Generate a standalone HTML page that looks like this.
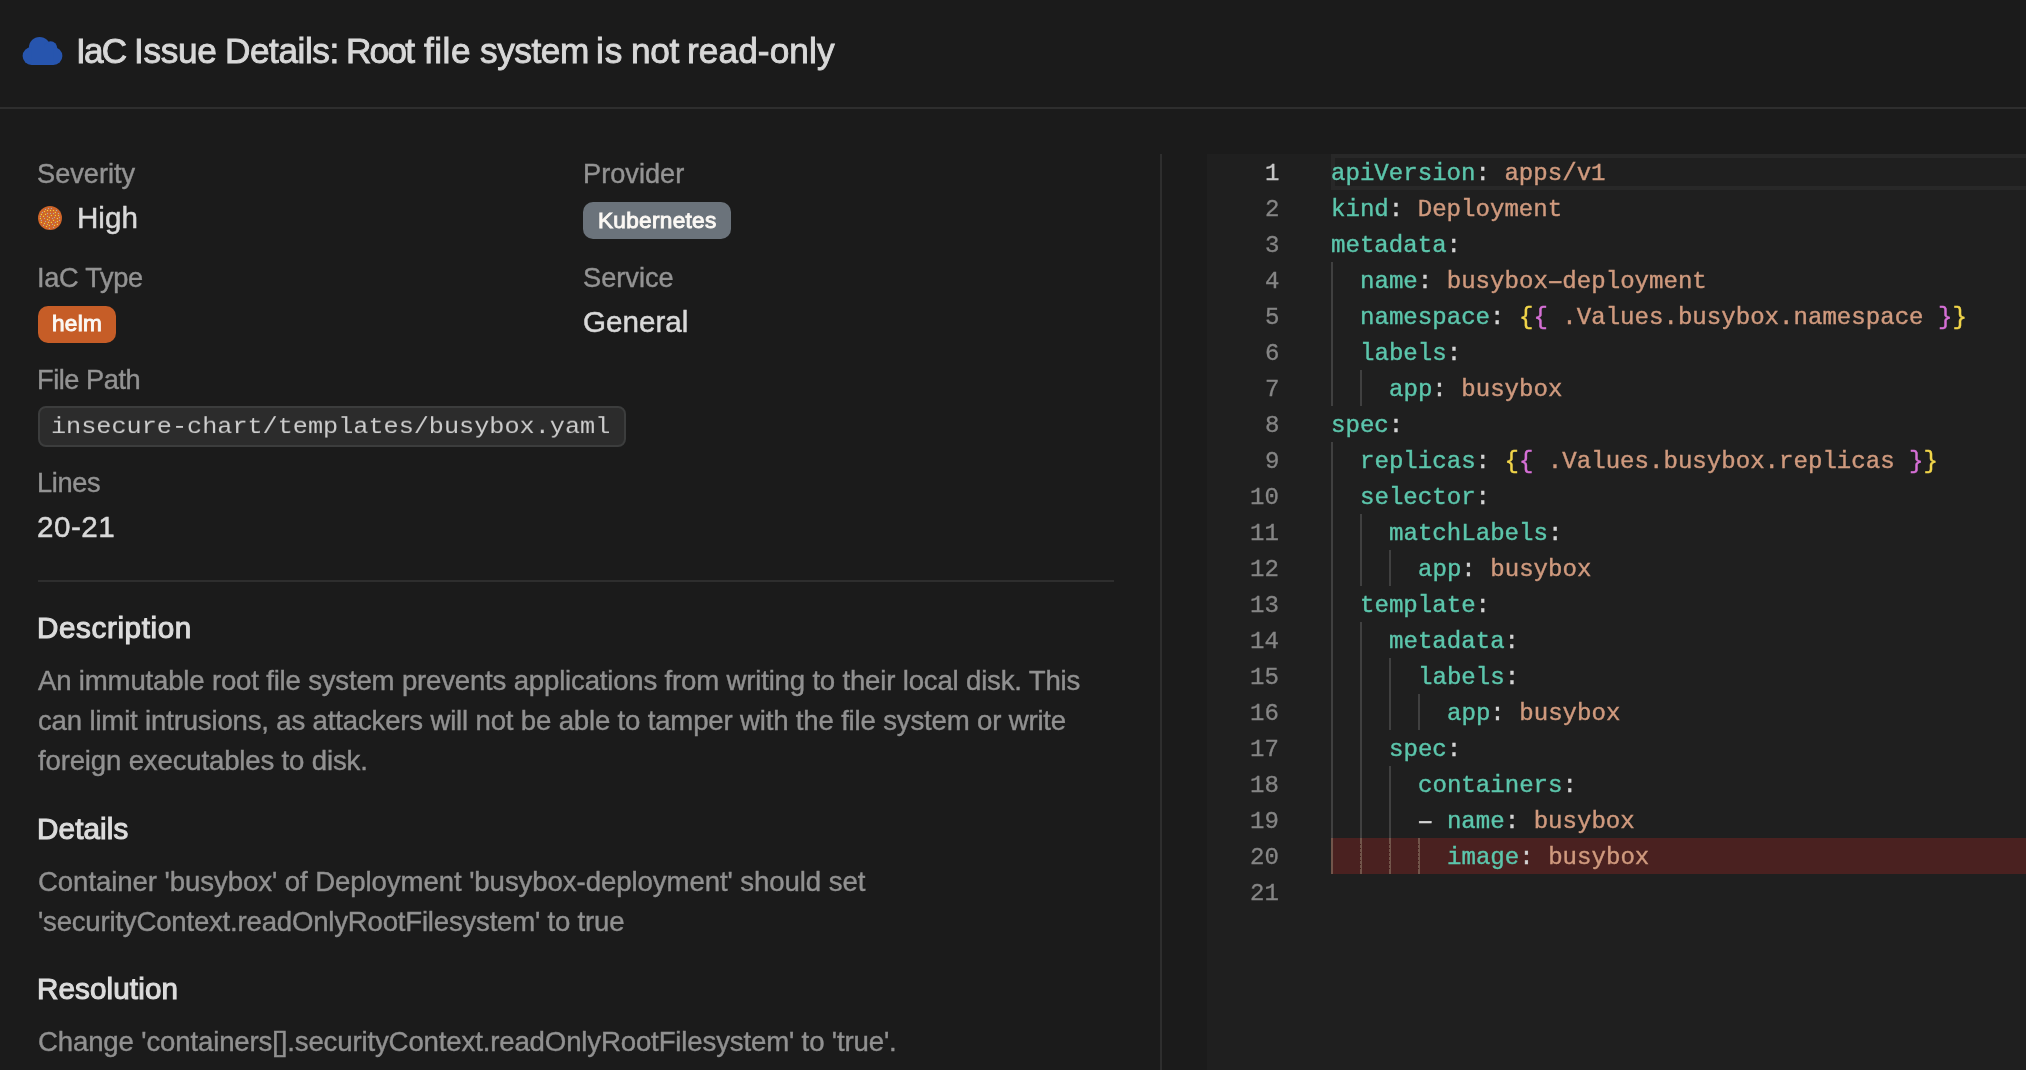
<!DOCTYPE html>
<html><head><meta charset="utf-8"><title>IaC Issue Details</title>
<style>
html,body{margin:0;padding:0;width:2026px;height:1070px;overflow:hidden;background:#1b1b1b}
.t{position:absolute;white-space:nowrap;font-family:"Liberation Sans",sans-serif;will-change:transform}
.m{position:absolute;white-space:nowrap;font-family:"Liberation Mono",monospace;will-change:transform}
.ln{right:747px;text-align:right;font-size:24.08px;line-height:36px;-webkit-text-stroke:0.3px currentColor}
.hy{display:inline-block;transform:scaleX(1.8)}
.code{font-size:24.08px;line-height:36px;-webkit-text-stroke:0.3px currentColor}
</style></head><body>
<svg class="cloud" width="44" height="32" viewBox="20 35 44 32" style="position:absolute;left:20px;top:35px"><g fill="#2755ae">
<circle cx="39.6" cy="47.6" r="10.7"/><circle cx="50.6" cy="47.8" r="6.6"/>
<circle cx="31.6" cy="56" r="9"/><circle cx="53.4" cy="56" r="9"/>
<rect x="31.6" y="47" width="21.8" height="18"/></g></svg>
<div class="t" style="left:76.0px;top:33.40px;font-size:35.2px;line-height:35.2px;color:#d8d8d8;font-weight:400;letter-spacing:-1.8px;-webkit-text-stroke:0.9px #d8d8d8;">IaC</div>
<div class="t" style="left:133.8px;top:33.40px;font-size:35.2px;line-height:35.2px;color:#d8d8d8;font-weight:400;letter-spacing:-0.31px;-webkit-text-stroke:0.9px #d8d8d8;">Issue</div>
<div class="t" style="left:225.4px;top:33.40px;font-size:35.2px;line-height:35.2px;color:#d8d8d8;font-weight:400;letter-spacing:-0.45px;-webkit-text-stroke:0.9px #d8d8d8;">Details:</div>
<div class="t" style="left:346.3px;top:33.40px;font-size:35.2px;line-height:35.2px;color:#d8d8d8;font-weight:400;letter-spacing:-1.8px;-webkit-text-stroke:0.9px #d8d8d8;">Root</div>
<div class="t" style="left:424.3px;top:33.40px;font-size:35.2px;line-height:35.2px;color:#d8d8d8;font-weight:400;letter-spacing:0.5px;-webkit-text-stroke:0.9px #d8d8d8;">file</div>
<div class="t" style="left:479.6px;top:33.40px;font-size:35.2px;line-height:35.2px;color:#d8d8d8;font-weight:400;letter-spacing:-0.45px;-webkit-text-stroke:0.9px #d8d8d8;">system</div>
<div class="t" style="left:596.2px;top:33.40px;font-size:35.2px;line-height:35.2px;color:#d8d8d8;font-weight:400;letter-spacing:0.9px;-webkit-text-stroke:0.9px #d8d8d8;">is</div>
<div class="t" style="left:630.6px;top:33.40px;font-size:35.2px;line-height:35.2px;color:#d8d8d8;font-weight:400;letter-spacing:-0.35px;-webkit-text-stroke:0.9px #d8d8d8;">not</div>
<div class="t" style="left:687.4px;top:33.40px;font-size:35.2px;line-height:35.2px;color:#d8d8d8;font-weight:400;letter-spacing:0.1px;-webkit-text-stroke:0.9px #d8d8d8;">read-only</div>
<div style="position:absolute;left:0;top:107px;width:2026px;height:2px;background:#2e2e2e"></div>
<div class="t" style="left:37px;top:160.18px;font-size:27.2px;line-height:27.2px;color:#939393;font-weight:400;letter-spacing:0px;-webkit-text-stroke:0.4px #939393;">Severity</div>
<div class="t" style="left:582.6px;top:160.18px;font-size:27.2px;line-height:27.2px;color:#939393;font-weight:400;letter-spacing:0px;-webkit-text-stroke:0.4px #939393;">Provider</div>
<svg width="24" height="24" viewBox="0 0 24 24" style="position:absolute;left:38px;top:206px"><circle cx="12" cy="12" r="12" fill="#cf6428"/><rect x="8.9" y="3.9" width="1.2" height="1.2" fill="#f2d03c"/><rect x="11.9" y="3.9" width="1.2" height="1.2" fill="#f2d03c"/><rect x="14.9" y="3.9" width="1.2" height="1.2" fill="#f2d03c"/><rect x="5.9" y="4.9" width="1.2" height="1.2" fill="#f2d03c"/><rect x="16.8" y="5.9" width="1.2" height="1.2" fill="#f2d03c"/><rect x="2.8" y="7.8" width="1.2" height="1.2" fill="#f2d03c"/><rect x="6.9" y="7.8" width="1.2" height="1.2" fill="#f2d03c"/><rect x="12.8" y="8.9" width="1.2" height="1.2" fill="#f2d03c"/><rect x="16.8" y="8.9" width="1.2" height="1.2" fill="#f2d03c"/><rect x="19.9" y="8.9" width="1.2" height="1.2" fill="#f2d03c"/><rect x="4.9" y="9.8" width="1.2" height="1.2" fill="#f2d03c"/><rect x="10.8" y="10.9" width="1.2" height="1.2" fill="#f2d03c"/><rect x="1.8" y="11.9" width="1.2" height="1.2" fill="#f2d03c"/><rect x="18.8" y="11.9" width="1.2" height="1.2" fill="#f2d03c"/><rect x="8.9" y="12.9" width="1.2" height="1.2" fill="#f2d03c"/><rect x="14.9" y="13.8" width="1.2" height="1.2" fill="#f2d03c"/><rect x="18.8" y="14.9" width="1.2" height="1.2" fill="#f2d03c"/><rect x="2.8" y="15.8" width="1.2" height="1.2" fill="#f2d03c"/><rect x="9.9" y="15.8" width="1.2" height="1.2" fill="#f2d03c"/><rect x="12.8" y="15.8" width="1.2" height="1.2" fill="#f2d03c"/><rect x="5.9" y="16.9" width="1.2" height="1.2" fill="#f2d03c"/><rect x="18.8" y="17.8" width="1.2" height="1.2" fill="#f2d03c"/><rect x="10.8" y="18.8" width="1.2" height="1.2" fill="#f2d03c"/><rect x="15.9" y="18.8" width="1.2" height="1.2" fill="#f2d03c"/><rect x="7.9" y="19.9" width="1.2" height="1.2" fill="#f2d03c"/><rect x="9.9" y="1.9" width="1.2" height="1.2" fill="#b8a4a0"/><rect x="12.8" y="1.9" width="1.2" height="1.2" fill="#b8a4a0"/><rect x="6.9" y="2.9" width="1.2" height="1.2" fill="#b8a4a0"/><rect x="17.9" y="3.9" width="1.2" height="1.2" fill="#b8a4a0"/><rect x="3.8" y="5.9" width="1.2" height="1.2" fill="#b8a4a0"/><rect x="8.9" y="6.9" width="1.2" height="1.2" fill="#b8a4a0"/><rect x="11.9" y="6.9" width="1.2" height="1.2" fill="#b8a4a0"/><rect x="14.9" y="6.9" width="1.2" height="1.2" fill="#b8a4a0"/><rect x="19.9" y="6.9" width="1.2" height="1.2" fill="#b8a4a0"/><rect x="1.8" y="9.8" width="1.2" height="1.2" fill="#b8a4a0"/><rect x="8.9" y="9.8" width="1.2" height="1.2" fill="#b8a4a0"/><rect x="15.9" y="10.9" width="1.2" height="1.2" fill="#b8a4a0"/><rect x="20.9" y="10.9" width="1.2" height="1.2" fill="#b8a4a0"/><rect x="5.9" y="11.9" width="1.2" height="1.2" fill="#b8a4a0"/><rect x="13.9" y="11.9" width="1.2" height="1.2" fill="#b8a4a0"/><rect x="2.8" y="13.8" width="1.2" height="1.2" fill="#b8a4a0"/><rect x="10.8" y="13.8" width="1.2" height="1.2" fill="#b8a4a0"/><rect x="20.9" y="13.8" width="1.2" height="1.2" fill="#b8a4a0"/><rect x="6.9" y="14.9" width="1.2" height="1.2" fill="#b8a4a0"/><rect x="16.8" y="15.8" width="1.2" height="1.2" fill="#b8a4a0"/><rect x="8.9" y="17.8" width="1.2" height="1.2" fill="#b8a4a0"/><rect x="13.9" y="17.8" width="1.2" height="1.2" fill="#b8a4a0"/><rect x="4.9" y="18.8" width="1.2" height="1.2" fill="#b8a4a0"/><rect x="14.9" y="20.8" width="1.2" height="1.2" fill="#b8a4a0"/><rect x="10.8" y="21.8" width="1.2" height="1.2" fill="#b8a4a0"/></svg>
<div class="t" style="left:77px;top:202.74px;font-size:29.6px;line-height:29.6px;color:#d9d9d9;font-weight:400;letter-spacing:0px;-webkit-text-stroke:0.5px #d9d9d9;">High</div>
<div style="position:absolute;left:583px;top:202px;width:148px;height:37px;border-radius:10px;background:#6b737b"></div>
<div class="t" style="left:597.8px;top:209.67px;font-size:22.6px;line-height:22.6px;color:#fbf8f4;font-weight:400;letter-spacing:0.3px;-webkit-text-stroke:0.95px #fbf8f4;">Kubernetes</div>
<div class="t" style="left:36.8px;top:263.78px;font-size:27.2px;line-height:27.2px;color:#939393;font-weight:400;letter-spacing:-0.3px;-webkit-text-stroke:0.4px #939393;">IaC Type</div>
<div class="t" style="left:582.6px;top:263.78px;font-size:27.2px;line-height:27.2px;color:#939393;font-weight:400;letter-spacing:0px;-webkit-text-stroke:0.4px #939393;">Service</div>
<div style="position:absolute;left:38px;top:306px;width:78px;height:37px;border-radius:10px;background:#c65d27"></div>
<div class="t" style="left:52px;top:313.07px;font-size:22.6px;line-height:22.6px;color:#fbf8f4;font-weight:400;letter-spacing:0.3px;-webkit-text-stroke:0.95px #fbf8f4;">helm</div>
<div class="t" style="left:582.5px;top:306.64px;font-size:29.6px;line-height:29.6px;color:#d9d9d9;font-weight:400;letter-spacing:0px;-webkit-text-stroke:0.5px #d9d9d9;">General</div>
<div class="t" style="left:36.8px;top:365.88px;font-size:27.2px;line-height:27.2px;color:#939393;font-weight:400;letter-spacing:-0.45px;-webkit-text-stroke:0.4px #939393;">File Path</div>
<div style="position:absolute;left:38px;top:406px;width:584px;height:37px;border-radius:8px;background:#2c2c2c;border:2px solid #3c3d3d"></div>
<div class="m" style="left:51.2px;top:412.19px;font-size:25.2px;line-height:30px;color:#cccccc;transform:scaleY(0.89);transform-origin:0 21.71px">insecure-chart/templates/busybox.yaml</div>
<div class="t" style="left:36.8px;top:468.98px;font-size:27.2px;line-height:27.2px;color:#939393;font-weight:400;letter-spacing:-0.35px;-webkit-text-stroke:0.4px #939393;">Lines</div>
<div class="t" style="left:37px;top:512.34px;font-size:29.6px;line-height:29.6px;color:#d9d9d9;font-weight:400;letter-spacing:0.5px;-webkit-text-stroke:0.5px #d9d9d9;">20-21</div>
<div style="position:absolute;left:38px;top:580px;width:1076px;height:2px;background:#2e2e2e"></div>
<div class="t" style="left:37px;top:612.54px;font-size:29.6px;line-height:29.6px;color:#dcdcdc;font-weight:400;letter-spacing:0.62px;-webkit-text-stroke:1.1px #dcdcdc;">Description</div>
<div class="t" style="left:37.5px;top:666.84px;font-size:27.6px;line-height:27.6px;color:#919191;font-weight:400;letter-spacing:-0.19px;-webkit-text-stroke:0.4px #919191;">An immutable root file system prevents applications from writing to their local disk. This</div>
<div class="t" style="left:37.5px;top:707.24px;font-size:27.6px;line-height:27.6px;color:#919191;font-weight:400;letter-spacing:-0.18px;-webkit-text-stroke:0.4px #919191;">can limit intrusions, as attackers will not be able to tamper with the file system or write</div>
<div class="t" style="left:37.5px;top:747.44px;font-size:27.6px;line-height:27.6px;color:#919191;font-weight:400;letter-spacing:-0.17px;-webkit-text-stroke:0.4px #919191;">foreign executables to disk.</div>
<div class="t" style="left:37px;top:813.54px;font-size:29.6px;line-height:29.6px;color:#dcdcdc;font-weight:400;letter-spacing:0.15px;-webkit-text-stroke:1.1px #dcdcdc;">Details</div>
<div class="t" style="left:37.5px;top:867.54px;font-size:27.6px;line-height:27.6px;color:#919191;font-weight:400;letter-spacing:-0.08px;-webkit-text-stroke:0.4px #919191;">Container 'busybox' of Deployment 'busybox-deployment' should set</div>
<div class="t" style="left:37.5px;top:907.84px;font-size:27.6px;line-height:27.6px;color:#919191;font-weight:400;letter-spacing:-0.21px;-webkit-text-stroke:0.4px #919191;">'securityContext.readOnlyRootFilesystem' to true</div>
<div class="t" style="left:37px;top:973.84px;font-size:29.6px;line-height:29.6px;color:#dcdcdc;font-weight:400;letter-spacing:0.12px;-webkit-text-stroke:1.1px #dcdcdc;">Resolution</div>
<div class="t" style="left:37.5px;top:1027.74px;font-size:27.6px;line-height:27.6px;color:#919191;font-weight:400;letter-spacing:-0.15px;-webkit-text-stroke:0.4px #919191;">Change 'containers[].securityContext.readOnlyRootFilesystem' to 'true'.</div>
<div style="position:absolute;left:1160px;top:154px;width:2px;height:916px;background:#2e2e2e"></div>
<div style="position:absolute;left:1207px;top:154px;width:819px;height:916px;background:#1f1f1f"></div>
<div style="position:absolute;left:1331px;top:154px;width:695px;height:36px;box-sizing:border-box;border:4px solid #282828;border-right:none"></div>
<div style="position:absolute;left:1331px;top:838px;width:695px;height:36px;background:#4a2120"></div>
<div class="m ln" style="top:155.59px;color:#c6c6c6">1</div>
<div class="m code" style="left:1331.00px;top:155.59px"><span style="color:#5cc6ac;-webkit-text-stroke:0.4px #5cc6ac">apiVersion</span><span style="color:#d4d4d4;-webkit-text-stroke:0.4px #d4d4d4">:&nbsp;</span><span style="color:#d09a7e;-webkit-text-stroke:0.4px #d09a7e">apps/v1</span></div>
<div class="m ln" style="top:191.59px;color:#858585">2</div>
<div class="m code" style="left:1331.00px;top:191.59px"><span style="color:#5cc6ac;-webkit-text-stroke:0.4px #5cc6ac">kind</span><span style="color:#d4d4d4;-webkit-text-stroke:0.4px #d4d4d4">:&nbsp;</span><span style="color:#d09a7e;-webkit-text-stroke:0.4px #d09a7e">Deployment</span></div>
<div class="m ln" style="top:227.59px;color:#858585">3</div>
<div class="m code" style="left:1331.00px;top:227.59px"><span style="color:#5cc6ac;-webkit-text-stroke:0.4px #5cc6ac">metadata</span><span style="color:#d4d4d4;-webkit-text-stroke:0.4px #d4d4d4">:</span></div>
<div style="position:absolute;left:1331.0px;top:262px;width:2px;height:36px;background:#404040"></div>
<div class="m ln" style="top:263.59px;color:#858585">4</div>
<div class="m code" style="left:1359.90px;top:263.59px"><span style="color:#5cc6ac;-webkit-text-stroke:0.4px #5cc6ac">name</span><span style="color:#d4d4d4;-webkit-text-stroke:0.4px #d4d4d4">:&nbsp;</span><span style="color:#d09a7e;-webkit-text-stroke:0.4px #d09a7e">busybox<span class=hy>-</span>deployment</span></div>
<div style="position:absolute;left:1331.0px;top:298px;width:2px;height:36px;background:#404040"></div>
<div class="m ln" style="top:299.59px;color:#858585">5</div>
<div class="m code" style="left:1359.90px;top:299.59px"><span style="color:#5cc6ac;-webkit-text-stroke:0.4px #5cc6ac">namespace</span><span style="color:#d4d4d4;-webkit-text-stroke:0.4px #d4d4d4">:&nbsp;</span><span style="color:#f1d54a;-webkit-text-stroke:0.4px #f1d54a">{</span><span style="color:#d670d6;-webkit-text-stroke:0.4px #d670d6">{</span><span style="color:#d09a7e;-webkit-text-stroke:0.4px #d09a7e">&nbsp;.Values.busybox.namespace&nbsp;</span><span style="color:#d670d6;-webkit-text-stroke:0.4px #d670d6">}</span><span style="color:#f1d54a;-webkit-text-stroke:0.4px #f1d54a">}</span></div>
<div style="position:absolute;left:1331.0px;top:334px;width:2px;height:36px;background:#404040"></div>
<div class="m ln" style="top:335.59px;color:#858585">6</div>
<div class="m code" style="left:1359.90px;top:335.59px"><span style="color:#5cc6ac;-webkit-text-stroke:0.4px #5cc6ac">labels</span><span style="color:#d4d4d4;-webkit-text-stroke:0.4px #d4d4d4">:</span></div>
<div style="position:absolute;left:1331.0px;top:370px;width:2px;height:36px;background:#404040"></div>
<div style="position:absolute;left:1359.9px;top:370px;width:2px;height:36px;background:#404040"></div>
<div class="m ln" style="top:371.59px;color:#858585">7</div>
<div class="m code" style="left:1388.80px;top:371.59px"><span style="color:#5cc6ac;-webkit-text-stroke:0.4px #5cc6ac">app</span><span style="color:#d4d4d4;-webkit-text-stroke:0.4px #d4d4d4">:&nbsp;</span><span style="color:#d09a7e;-webkit-text-stroke:0.4px #d09a7e">busybox</span></div>
<div class="m ln" style="top:407.59px;color:#858585">8</div>
<div class="m code" style="left:1331.00px;top:407.59px"><span style="color:#5cc6ac;-webkit-text-stroke:0.4px #5cc6ac">spec</span><span style="color:#d4d4d4;-webkit-text-stroke:0.4px #d4d4d4">:</span></div>
<div style="position:absolute;left:1331.0px;top:442px;width:2px;height:36px;background:#404040"></div>
<div class="m ln" style="top:443.59px;color:#858585">9</div>
<div class="m code" style="left:1359.90px;top:443.59px"><span style="color:#5cc6ac;-webkit-text-stroke:0.4px #5cc6ac">replicas</span><span style="color:#d4d4d4;-webkit-text-stroke:0.4px #d4d4d4">:&nbsp;</span><span style="color:#f1d54a;-webkit-text-stroke:0.4px #f1d54a">{</span><span style="color:#d670d6;-webkit-text-stroke:0.4px #d670d6">{</span><span style="color:#d09a7e;-webkit-text-stroke:0.4px #d09a7e">&nbsp;.Values.busybox.replicas&nbsp;</span><span style="color:#d670d6;-webkit-text-stroke:0.4px #d670d6">}</span><span style="color:#f1d54a;-webkit-text-stroke:0.4px #f1d54a">}</span></div>
<div style="position:absolute;left:1331.0px;top:478px;width:2px;height:36px;background:#404040"></div>
<div class="m ln" style="top:479.59px;color:#858585">10</div>
<div class="m code" style="left:1359.90px;top:479.59px"><span style="color:#5cc6ac;-webkit-text-stroke:0.4px #5cc6ac">selector</span><span style="color:#d4d4d4;-webkit-text-stroke:0.4px #d4d4d4">:</span></div>
<div style="position:absolute;left:1331.0px;top:514px;width:2px;height:36px;background:#404040"></div>
<div style="position:absolute;left:1359.9px;top:514px;width:2px;height:36px;background:#404040"></div>
<div class="m ln" style="top:515.59px;color:#858585">11</div>
<div class="m code" style="left:1388.80px;top:515.59px"><span style="color:#5cc6ac;-webkit-text-stroke:0.4px #5cc6ac">matchLabels</span><span style="color:#d4d4d4;-webkit-text-stroke:0.4px #d4d4d4">:</span></div>
<div style="position:absolute;left:1331.0px;top:550px;width:2px;height:36px;background:#404040"></div>
<div style="position:absolute;left:1359.9px;top:550px;width:2px;height:36px;background:#404040"></div>
<div style="position:absolute;left:1388.8px;top:550px;width:2px;height:36px;background:#404040"></div>
<div class="m ln" style="top:551.59px;color:#858585">12</div>
<div class="m code" style="left:1417.70px;top:551.59px"><span style="color:#5cc6ac;-webkit-text-stroke:0.4px #5cc6ac">app</span><span style="color:#d4d4d4;-webkit-text-stroke:0.4px #d4d4d4">:&nbsp;</span><span style="color:#d09a7e;-webkit-text-stroke:0.4px #d09a7e">busybox</span></div>
<div style="position:absolute;left:1331.0px;top:586px;width:2px;height:36px;background:#404040"></div>
<div class="m ln" style="top:587.59px;color:#858585">13</div>
<div class="m code" style="left:1359.90px;top:587.59px"><span style="color:#5cc6ac;-webkit-text-stroke:0.4px #5cc6ac">template</span><span style="color:#d4d4d4;-webkit-text-stroke:0.4px #d4d4d4">:</span></div>
<div style="position:absolute;left:1331.0px;top:622px;width:2px;height:36px;background:#404040"></div>
<div style="position:absolute;left:1359.9px;top:622px;width:2px;height:36px;background:#404040"></div>
<div class="m ln" style="top:623.59px;color:#858585">14</div>
<div class="m code" style="left:1388.80px;top:623.59px"><span style="color:#5cc6ac;-webkit-text-stroke:0.4px #5cc6ac">metadata</span><span style="color:#d4d4d4;-webkit-text-stroke:0.4px #d4d4d4">:</span></div>
<div style="position:absolute;left:1331.0px;top:658px;width:2px;height:36px;background:#404040"></div>
<div style="position:absolute;left:1359.9px;top:658px;width:2px;height:36px;background:#404040"></div>
<div style="position:absolute;left:1388.8px;top:658px;width:2px;height:36px;background:#404040"></div>
<div class="m ln" style="top:659.59px;color:#858585">15</div>
<div class="m code" style="left:1417.70px;top:659.59px"><span style="color:#5cc6ac;-webkit-text-stroke:0.4px #5cc6ac">labels</span><span style="color:#d4d4d4;-webkit-text-stroke:0.4px #d4d4d4">:</span></div>
<div style="position:absolute;left:1331.0px;top:694px;width:2px;height:36px;background:#404040"></div>
<div style="position:absolute;left:1359.9px;top:694px;width:2px;height:36px;background:#404040"></div>
<div style="position:absolute;left:1388.8px;top:694px;width:2px;height:36px;background:#404040"></div>
<div style="position:absolute;left:1417.7px;top:694px;width:2px;height:36px;background:#404040"></div>
<div class="m ln" style="top:695.59px;color:#858585">16</div>
<div class="m code" style="left:1446.60px;top:695.59px"><span style="color:#5cc6ac;-webkit-text-stroke:0.4px #5cc6ac">app</span><span style="color:#d4d4d4;-webkit-text-stroke:0.4px #d4d4d4">:&nbsp;</span><span style="color:#d09a7e;-webkit-text-stroke:0.4px #d09a7e">busybox</span></div>
<div style="position:absolute;left:1331.0px;top:730px;width:2px;height:36px;background:#404040"></div>
<div style="position:absolute;left:1359.9px;top:730px;width:2px;height:36px;background:#404040"></div>
<div class="m ln" style="top:731.59px;color:#858585">17</div>
<div class="m code" style="left:1388.80px;top:731.59px"><span style="color:#5cc6ac;-webkit-text-stroke:0.4px #5cc6ac">spec</span><span style="color:#d4d4d4;-webkit-text-stroke:0.4px #d4d4d4">:</span></div>
<div style="position:absolute;left:1331.0px;top:766px;width:2px;height:36px;background:#404040"></div>
<div style="position:absolute;left:1359.9px;top:766px;width:2px;height:36px;background:#404040"></div>
<div style="position:absolute;left:1388.8px;top:766px;width:2px;height:36px;background:#404040"></div>
<div class="m ln" style="top:767.59px;color:#858585">18</div>
<div class="m code" style="left:1417.70px;top:767.59px"><span style="color:#5cc6ac;-webkit-text-stroke:0.4px #5cc6ac">containers</span><span style="color:#d4d4d4;-webkit-text-stroke:0.4px #d4d4d4">:</span></div>
<div style="position:absolute;left:1331.0px;top:802px;width:2px;height:36px;background:#404040"></div>
<div style="position:absolute;left:1359.9px;top:802px;width:2px;height:36px;background:#404040"></div>
<div style="position:absolute;left:1388.8px;top:802px;width:2px;height:36px;background:#404040"></div>
<div class="m ln" style="top:803.59px;color:#858585">19</div>
<div class="m code" style="left:1417.70px;top:803.59px"><span style="color:#d4d4d4;-webkit-text-stroke:0.4px #d4d4d4"><span class=hy>-</span>&nbsp;</span><span style="color:#5cc6ac;-webkit-text-stroke:0.4px #5cc6ac">name</span><span style="color:#d4d4d4;-webkit-text-stroke:0.4px #d4d4d4">:&nbsp;</span><span style="color:#d09a7e;-webkit-text-stroke:0.4px #d09a7e">busybox</span></div>
<div style="position:absolute;left:1331.0px;top:838px;width:2px;height:36px;background:#72554a"></div>
<div style="position:absolute;left:1359.9px;top:838px;width:2px;height:36px;background:#72554a"></div>
<div style="position:absolute;left:1359.9px;top:841px;width:1px;height:30px;background:repeating-linear-gradient(#72554a 0 3px,#4a2120 3px 4px)"></div>
<div style="position:absolute;left:1388.8px;top:838px;width:2px;height:36px;background:#72554a"></div>
<div style="position:absolute;left:1388.8px;top:841px;width:1px;height:30px;background:repeating-linear-gradient(#72554a 0 3px,#4a2120 3px 4px)"></div>
<div style="position:absolute;left:1417.7px;top:838px;width:2px;height:36px;background:#72554a"></div>
<div style="position:absolute;left:1417.7px;top:841px;width:1px;height:30px;background:repeating-linear-gradient(#72554a 0 3px,#4a2120 3px 4px)"></div>
<div class="m ln" style="top:839.59px;color:#858585">20</div>
<div class="m code" style="left:1446.60px;top:839.59px"><span style="color:#5cc6ac;-webkit-text-stroke:0.4px #5cc6ac">image</span><span style="color:#d4d4d4;-webkit-text-stroke:0.4px #d4d4d4">:&nbsp;</span><span style="color:#d09a7e;-webkit-text-stroke:0.4px #d09a7e">busybox</span></div>
<div class="m ln" style="top:875.59px;color:#858585">21</div>
</body></html>
